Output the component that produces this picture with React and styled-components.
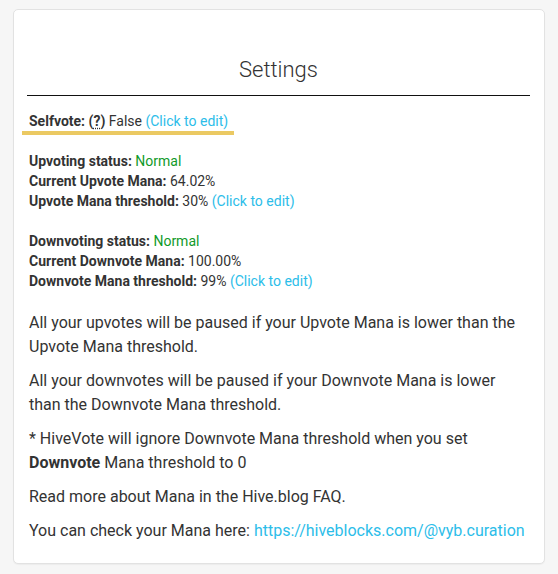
import React from 'react';
import styled, { createGlobalStyle } from 'styled-components';

const GlobalStyle = createGlobalStyle`
  html, body {
    margin: 0;
    padding: 0;
    background-color: #f6f6f6;
    font-family: Roboto, "Liberation Sans", sans-serif;
    color: #333333;
  }
`;

const Page = styled.div`
  padding: 9px 13px 11px 13px;
`;

const Card = styled.div`
  background-color: #ffffff;
  border: 1px solid #e2e2e2;
  border-radius: 5px;
  padding: 45px 16px 10px 15px;
  box-shadow: 0 1px 1px rgba(0, 0, 0, 0.04);
`;

const Title = styled.h2`
  margin: 0 -2px;
  font-size: 22px;
  font-weight: 300;
  text-align: center;
  line-height: 30px;
  color: #333333;
  padding-bottom: 10px;
  border-bottom: 1px solid #111111;
`;

const Selfvote = styled.div`
  display: inline-block;
  margin: 15px 0 0 -7px;
  padding: 0 6px 0 7px;
  font-size: 14px;
  line-height: 20px;
  border-bottom: 4px solid #ebc962;
`;

const Block = styled.div`
  margin-top: ${(props) => props.gap || 20}px;
  font-size: 14px;
  line-height: 20px;
`;

const Label = styled.b`
  font-weight: 700;
`;

const Status = styled.span`
  color: #119a2a;
`;

const Abbr = styled.abbr`
  text-decoration: underline dotted;
  text-underline-offset: 2px;
  cursor: help;
`;

const Link = styled.a`
  color: #2cbde9;
  text-decoration: none;
  cursor: pointer;
`;

const Notes = styled.div`
  margin-top: 20px;
  font-size: 16px;
  line-height: 24px;
`;

const Para = styled.p`
  margin: 0 0 10px 0;
`;

export default function App() {
  return (
    <>
      <GlobalStyle />
      <Page>
        <Card>
          <Title>Settings</Title>
          <Selfvote>
            <Label>Selfvote:</Label>{' '}
            <Label>
              (<Abbr title="Vote your own posts">?</Abbr>)
            </Label>{' '}
            False <Link>(Click to edit)</Link>
          </Selfvote>
          <Block gap={16}>
            <Label>Upvoting status:</Label> <Status>Normal</Status>
            <br />
            <Label>Current Upvote Mana:</Label> 64.02%
            <br />
            <Label>Upvote Mana threshold:</Label> 30% <Link>(Click to edit)</Link>
          </Block>
          <Block>
            <Label>Downvoting status:</Label> <Status>Normal</Status>
            <br />
            <Label>Current Downvote Mana:</Label> 100.00%
            <br />
            <Label>Downvote Mana threshold:</Label> 99% <Link>(Click to edit)</Link>
          </Block>
          <Notes>
            <Para>
              All your upvotes will be paused if your Upvote Mana is lower than the Upvote Mana
              threshold.
            </Para>
            <Para>
              All your downvotes will be paused if your Downvote Mana is lower than the Downvote
              Mana threshold.
            </Para>
            <Para>
              * HiveVote will ignore Downvote Mana threshold when you set <Label>Downvote</Label>{' '}
              Mana threshold to 0
            </Para>
            <Para>Read more about Mana in the Hive.blog FAQ.</Para>
            <Para>
              You can check your Mana here:{' '}
              <Link>https://hiveblocks.com/@vyb.curation</Link>
            </Para>
          </Notes>
        </Card>
      </Page>
    </>
  );
}
